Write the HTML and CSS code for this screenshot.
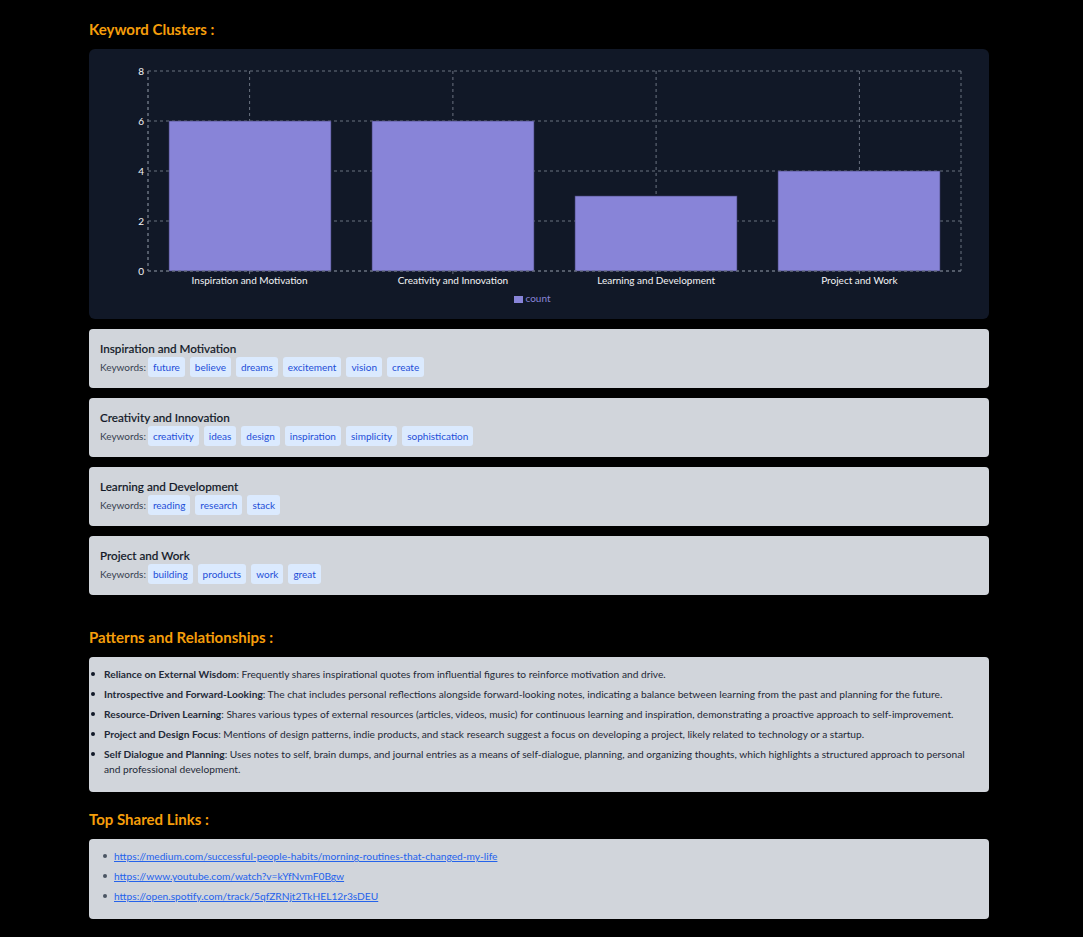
FILE: index.html
```html
<!DOCTYPE html>
<html lang="en">
<head>
<meta charset="utf-8">
<title>Analysis</title>
<link rel="stylesheet" href="styles.css">
</head>
<body>
<main class="page">
  <section class="section clusters">
    <h2 class="heading">Keyword Clusters :</h2>
    <div class="chart-card">
      <svg class="chart" width="900" height="270" viewBox="0 0 900 270">
        <g class="grid">
          <line x1="59" y1="22" x2="872" y2="22"/>
          <line x1="59" y1="72" x2="872" y2="72"/>
          <line x1="59" y1="122" x2="872" y2="122"/>
          <line x1="59" y1="172" x2="872" y2="172"/>
          <line x1="59" y1="222" x2="872" y2="222"/>
          <line x1="59" y1="22" x2="59" y2="222"/>
          <line x1="160.6" y1="22" x2="160.6" y2="222"/>
          <line x1="363.9" y1="22" x2="363.9" y2="222"/>
          <line x1="567.1" y1="22" x2="567.1" y2="222"/>
          <line x1="770.4" y1="22" x2="770.4" y2="222"/>
          <line x1="872" y1="22" x2="872" y2="222"/>
        </g>
        <g class="bars">
          <rect x="80" y="72" width="162" height="150"/>
          <rect x="283" y="72" width="162" height="150"/>
          <rect x="486" y="147" width="162" height="75"/>
          <rect x="689" y="122" width="162" height="100"/>
        </g>
        <g class="axis">
          <line x1="59" y1="22" x2="59" y2="222"/>
          <line x1="59" y1="222" x2="872" y2="222"/>
          <line x1="160.6" y1="222" x2="160.6" y2="227"/>
          <line x1="363.9" y1="222" x2="363.9" y2="227"/>
          <line x1="567.1" y1="222" x2="567.1" y2="227"/>
          <line x1="770.4" y1="222" x2="770.4" y2="227"/>
        </g>
        <g class="ytick">
          <text x="55" y="25.5">8</text>
          <text x="55" y="75.5">6</text>
          <text x="55" y="125.5">4</text>
          <text x="55" y="175.5">2</text>
          <text x="55" y="225.5">0</text>
        </g>
        <g class="xtick">
          <text x="160.6" y="235">Inspiration and Motivation</text>
          <text x="363.9" y="235">Creativity and Innovation</text>
          <text x="567.1" y="235">Learning and Development</text>
          <text x="770.4" y="235">Project and Work</text>
        </g>
        <g class="legend">
          <rect x="425" y="247" width="9" height="7"/>
          <text x="436.5" y="252.5">count</text>
        </g>
      </svg>
    </div>

    <div class="cluster-card">
      <div class="cluster-title">Inspiration and Motivation</div>
      <div class="kw-row">
        <span class="kw-label">Keywords:</span>
        <span class="chip">future</span><span class="chip">believe</span><span class="chip">dreams</span><span class="chip">excitement</span><span class="chip">vision</span><span class="chip">create</span>
      </div>
    </div>
    <div class="cluster-card">
      <div class="cluster-title">Creativity and Innovation</div>
      <div class="kw-row">
        <span class="kw-label">Keywords:</span>
        <span class="chip">creativity</span><span class="chip">ideas</span><span class="chip">design</span><span class="chip">inspiration</span><span class="chip">simplicity</span><span class="chip">sophistication</span>
      </div>
    </div>
    <div class="cluster-card">
      <div class="cluster-title">Learning and Development</div>
      <div class="kw-row">
        <span class="kw-label">Keywords:</span>
        <span class="chip">reading</span><span class="chip">research</span><span class="chip">stack</span>
      </div>
    </div>
    <div class="cluster-card">
      <div class="cluster-title">Project and Work</div>
      <div class="kw-row">
        <span class="kw-label">Keywords:</span>
        <span class="chip">building</span><span class="chip">products</span><span class="chip">work</span><span class="chip">great</span>
      </div>
    </div>
  </section>

  <section class="section patterns">
    <h2 class="heading">Patterns and Relationships :</h2>
    <div class="text-card">
      <ul class="pattern-list">
        <li><strong>Reliance on External Wisdom</strong>: Frequently shares inspirational quotes from influential figures to reinforce motivation and drive.</li>
        <li><strong>Introspective and Forward-Looking</strong>: The chat includes personal reflections alongside forward-looking notes, indicating a balance between learning from the past and planning for the future.</li>
        <li><strong>Resource-Driven Learning</strong>: Shares various types of external resources (articles, videos, music) for continuous learning and inspiration, demonstrating a proactive approach to self-improvement.</li>
        <li><strong>Project and Design Focus</strong>: Mentions of design patterns, indie products, and stack research suggest a focus on developing a project, likely related to technology or a startup.</li>
        <li><strong>Self Dialogue and Planning</strong>: Uses notes to self, brain dumps, and journal entries as a means of self-dialogue, planning, and organizing thoughts, which highlights a structured approach to personal and professional development.</li>
      </ul>
    </div>
  </section>

  <section class="section links">
    <h2 class="heading">Top Shared Links :</h2>
    <div class="text-card">
      <ul class="link-list">
        <li><a href="#">https://medium.com/successful-people-habits/morning-routines-that-changed-my-life</a></li>
        <li><a href="#">https://www.youtube.com/watch?v=kYfNvmF0Bgw</a></li>
        <li><a href="#">https://open.spotify.com/track/5qfZRNjt2TkHEL12r3sDEU</a></li>
      </ul>
    </div>
  </section>
</main>
</body>
</html>
```

FILE: styles.css
```css
html, body {
  margin: 0;
  padding: 0;
  background: #000;
}

body {
  font-family: "Lato", "Noto Sans", sans-serif;
  color: #1f2937;
}

.page {
  width: 900px;
  margin-left: 89px;
  padding-top: 17px;
  padding-bottom: 19px;
}

.heading {
  margin: 0 0 8px 0;
  font-size: 15px;
  line-height: 24px;
  font-weight: 700;
  color: #f59e0b;
}

.clusters {
  margin-bottom: 30px;
}

.patterns {
  margin-bottom: 15px;
}

.chart-card {
  background: #111827;
  border-radius: 6px;
  height: 270px;
  margin-bottom: 10px;
}

.chart {
  display: block;
}

.grid line {
  stroke: #6b7280;
  stroke-width: 1;
  stroke-dasharray: 3 3;
}

.axis line {
  stroke: #6b7280;
  stroke-width: 1;
  stroke-dasharray: 3 3;
}

.bars rect {
  fill: #8884d8;
  stroke: #3f3d6b;
  stroke-width: 0.6;
}

.ytick text {
  fill: #f3f4f6;
  font-size: 10px;
  text-anchor: end;
  font-family: "Lato", "Noto Sans", sans-serif;
}

.xtick text {
  fill: #f3f4f6;
  font-size: 10px;
  text-anchor: middle;
  font-family: "Lato", "Noto Sans", sans-serif;
}

.legend rect {
  fill: #8884d8;
}

.legend text {
  fill: #8884d8;
  font-size: 10px;
  font-family: "Lato", "Noto Sans", sans-serif;
}

.cluster-card {
  background: #d1d5db;
  border-radius: 4px;
  padding: 11px 11px 10px 11px;
  height: 59px;
  box-sizing: border-box;
  margin-bottom: 10px;
}

.cluster-card:last-child {
  margin-bottom: 0;
}

.cluster-title {
  font-size: 11.7px;
  line-height: 17px;
  font-weight: 500;
  color: #111827;
  -webkit-text-stroke: 0.15px #111827;
}

.kw-row {
  display: flex;
  align-items: center;
  gap: 5px;
  height: 20px;
}

.kw-label {
  font-size: 10px;
  color: #374151;
  margin-right: -3px;
}

.chip {
  background: #dbeafe;
  color: #1d4ed8;
  font-size: 10px;
  line-height: 20px;
  height: 20px;
  padding: 0 5px;
  border-radius: 3px;
}

.text-card {
  background: #d1d5db;
  border-radius: 4px;
  padding: 10px 15px 10px 15px;
}

.pattern-list,
.link-list {
  margin: 0;
  padding: 0;
  list-style: none;
  font-size: 10.2px;
  line-height: 15px;
  color: #1f2937;
}

.pattern-list li,
.link-list li {
  margin-bottom: 5px;
}

.pattern-list li::before,
.link-list li::before {
  content: "";
  display: inline-block;
  width: 4px;
  height: 4px;
  border-radius: 50%;
  vertical-align: middle;
  position: relative;
  top: -1px;
}

.pattern-list li::before {
  background: #111827;
  margin-left: -13px;
  margin-right: 9px;
}

.link-list {
  padding-left: 10px;
}

.link-list li::before {
  background: #4b5563;
  margin-left: -11px;
  margin-right: 7px;
}

.pattern-list strong {
  font-weight: 700;
}

.link-list a {
  color: #2563eb;
  text-decoration: underline;
}
```
